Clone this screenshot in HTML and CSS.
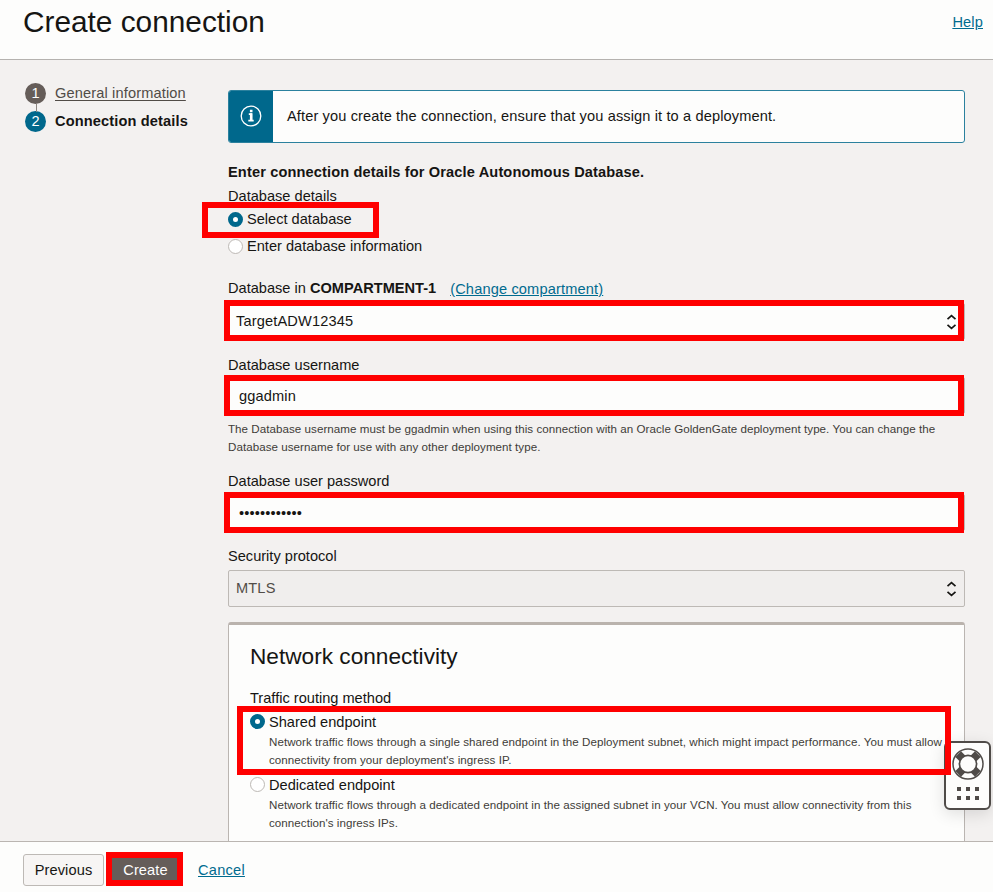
FILE: index.html
```
<!DOCTYPE html>
<html lang="en">
<head>
<meta charset="utf-8">
<title>Create connection</title>
<link rel="stylesheet" href="styles.css">
</head>
<body>
<div class="dialog">
  <header class="header">
    <h1>Create connection</h1>
    <a class="link help" href="#">Help</a>
  </header>
  <main class="main">
    <nav class="steps">
      <div class="step done"><span class="num">1</span><a href="#">General information</a></div>
      <div class="step current"><span class="num">2</span><b>Connection details</b></div>
    </nav>
    <section class="content">
      <div class="alert">
        <div class="alert-icon">
          <svg width="22" height="22" viewBox="0 0 22 22" fill="none" stroke="#fff"><circle cx="11" cy="11" r="9.8" stroke-width="1.3"/><path d="M8.8 9.2h2.4v6.3M8.3 15.6h5.4" stroke-width="1.8"/><path d="M11.2 8.3v7.5" stroke-width="2.6"/><path d="M9.9 6h2.6" stroke-width="2.3"/></svg>
        </div>
        <p>After you create the connection, ensure that you assign it to a deployment.</p>
      </div>
      <h2 class="heading">Enter connection details for Oracle Autonomous Database.</h2>
      <div class="label group-label">Database details</div>
      <div class="radio marked mark-select"><span class="dot on"></span>Select database</div>
      <div class="radio second"><span class="dot"></span>Enter database information</div>
      <div class="label compartment"><span>Database in <b>COMPARTMENT-1</b></span><a class="link" href="#">(Change compartment)</a></div>
      <div class="field select marked mark-field first"><span>TargetADW12345</span>
        <svg class="chev" width="11" height="16" viewBox="0 0 11 16"><path d="M1.5 5.2 5.5 1.7 9.5 5.2M1.5 10.8 5.5 14.3 9.5 10.8"/></svg>
      </div>
      <div class="label username">Database username</div>
      <div class="field input marked mark-field">ggadmin</div>
      <p class="hint">The Database username must be ggadmin when using this connection with an Oracle GoldenGate deployment type. You can change the<br>Database username for use with any other deployment type.</p>
      <div class="label password">Database user password</div>
      <div class="field input secret marked mark-field"><span>••••••••••••</span></div>
      <div class="label protocol">Security protocol</div>
      <div class="field select disabled"><span>MTLS</span>
        <svg class="chev" width="11" height="16" viewBox="0 0 11 16"><path d="M1.5 5.2 5.5 1.7 9.5 5.2M1.5 10.8 5.5 14.3 9.5 10.8"/></svg>
      </div>
      <div class="panel">
        <h2>Network connectivity</h2>
        <div class="label routing">Traffic routing method</div>
        <div class="option marked mark-option">
          <div class="radio"><span class="dot on"></span>Shared endpoint</div>
          <p class="desc">Network traffic flows through a single shared endpoint in the Deployment subnet, which might impact performance. You must allow<br>connectivity from your deployment's ingress IP.</p>
        </div>
        <div class="option">
          <div class="radio"><span class="dot"></span>Dedicated endpoint</div>
          <p class="desc">Network traffic flows through a dedicated endpoint in the assigned subnet in your VCN. You must allow connectivity from this<br>connection's ingress IPs.</p>
        </div>
      </div>
    </section>
  </main>
  <footer class="footer">
    <button class="btn">Previous</button>
    <button class="btn primary marked mark-create">Create</button>
    <a class="link" href="#">Cancel</a>
  </footer>
  <div class="support">
    <svg width="32" height="32" viewBox="0 0 32 32" fill="none" stroke="#4f4b48">
      <path d="M6.2 6.2 25.8 25.8M25.8 6.2 6.2 25.8" stroke-width="8"/>
      <circle cx="16" cy="16" r="15" stroke-width="1.5"/>
      <circle cx="16" cy="16" r="8.6" stroke-width="1.7" fill="#fdfdfc"/>
    </svg>
    <div class="grip"><i></i><i></i><i></i><i></i><i></i><i></i></div>
  </div>
</div>
</body>
</html>
```
FILE: styles.css
```
*, *::after { box-sizing: border-box; }
body {
  margin: 0;
  background: #fdfdfc;
  color: #161513;
  font: 14.6px/20px "Liberation Sans", Arial, sans-serif;
}
h1, h2, p { margin: 0; font-weight: normal; }
.dialog {
  position: relative;
  display: flex;
  flex-direction: column;
  height: 892px;
  overflow: hidden;
}
.header {
  flex: none;
  display: flex;
  justify-content: space-between;
  height: 60px;
  padding: 2px 10px 0 23px;
  border-bottom: 1px solid #b5b2af;
}
h1 { font-size: 29.8px; line-height: 40px; }
.link {
  color: #006b8f;
  text-decoration: underline;
  text-underline-offset: 1px;
  letter-spacing: .15px;
}
.help { padding-top: 10px; }
.main {
  flex: 1;
  min-height: 0;
  display: flex;
  background: #f3f1f0;
  overflow: hidden;
}
.steps {
  flex: none;
  width: 228px;
  padding: 22px 0 0 25px;
  letter-spacing: .13px;
}
.step { display: flex; align-items: center; gap: 9px; height: 22px; }
.step + .step { margin-top: 6px; }
.step a { color: #514c47; text-underline-offset: 2px; letter-spacing: .14px; }
.num {
  width: 21px;
  height: 21px;
  border-radius: 50%;
  background: #655d59;
  color: #fff;
  text-align: center;
  line-height: 21px;
}
.done .num { position: relative; }
.done .num::after {
  content: "";
  position: absolute;
  left: 11px;
  top: 21px;
  width: 1px;
  height: 8px;
  background: #8b8580;
}
.current .num { background: #00688c; }
.content { flex: none; width: 737px; padding-top: 30px; }
.alert {
  display: flex;
  height: 53px;
  border: 1px solid #2b819e;
  border-radius: 3px;
  background: #fdfdfc;
  overflow: hidden;
}
.alert-icon {
  width: 44px;
  display: flex;
  align-items: center;
  justify-content: center;
  padding: 0 1px 1px 0;
  background: #00688c;
}
.alert p { padding: 15px 0 0 14px; letter-spacing: .12px; }
.heading {
  margin-top: 19px;
  font-size: 14.6px;
  font-weight: bold;
  letter-spacing: .13px;
}
.group-label { margin-top: 4px; }
.radio { display: flex; align-items: center; gap: 4px; height: 20px; }
.mark-select { margin-top: 3px; }
.second { margin-top: 7px; }
.dot {
  width: 15px;
  height: 15px;
  border: 1px solid #bdb9b5;
  border-radius: 50%;
  background: #fff;
}
.dot.on { border: 5px solid #00688c; }
.marked { position: relative; }
.marked::after {
  content: "";
  position: absolute;
  border: 6px solid #f00;
}
.mark-select::after { left: -26px; top: -7px; width: 177px; height: 36px; }
.compartment { display: flex; gap: 14px; margin-top: 22px; }
.compartment .link { position: relative; top: 1px; }
.field {
  display: flex;
  align-items: center;
  justify-content: space-between;
  height: 37px;
  border: 1px solid #bdb9b5;
  border-radius: 2px;
  background: #fdfdfc;
  padding: 0 7px;
  letter-spacing: .15px;
}
.select span { padding-bottom: 2px; }
.first { margin-top: 5px; }
.mark-field::after { left: -5px; top: -4px; width: 740px; height: 41px; }
.input.mark-field::after { top: -3px; }
.chev { fill: none; stroke: #161513; stroke-width: 1.7; }
.username { margin-top: 15px; }
.input { margin-top: 2px; padding-left: 10px; }
.hint, .desc {
  font-size: 11.6px;
  line-height: 18px;
  color: #403c38;
  white-space: nowrap;
  letter-spacing: .043px;
}
.hint { margin-top: 6px; }
.password { margin-top: 15px; }
.secret { margin-top: 3px; }
.protocol { margin-top: 15px; }
.disabled { margin-top: 4px; background: #f0eeed; color: #514c47; }
.panel {
  height: 260px;
  margin-top: 15px;
  padding: 18px 0 0 21px;
  border: 1px solid #bab5b1;
  border-top: 3px solid #bab3ad;
  border-radius: 3px 3px 0 0;
  background: #fdfdfc;
}
.panel h2 { font-size: 22.65px; line-height: 26px; }
.routing { margin: 19px 0 4px; }
.option { height: 63px; }
.option .dot { margin-bottom: 1px; }
.desc { padding: 1px 0 0 19px; }
.mark-option { z-index: 2; }
.mark-option::after { left: -13px; top: -6px; width: 714px; height: 69px; }
.footer {
  flex: none;
  display: flex;
  align-items: center;
  height: 51px;
  padding: 6px 0 0 23px;
  border-top: 1px solid #bab5b1;
}
.btn {
  width: 81px;
  height: 32px;
  padding: 0;
  border: 1px solid #bdb9b5;
  border-radius: 3px;
  background: #f7f5f4;
  color: #161513;
  font: inherit;
  letter-spacing: .12px;
}
.primary {
  width: 69px;
  margin: 0 17px 0 7px;
  background: #655d59;
  color: #fff;
}
.mark-create::after { left: -6px; top: -3px; width: 77px; height: 34px; }
.footer .link { margin-left: 1px; letter-spacing: .25px; }
.support {
  position: absolute;
  left: 944px;
  top: 741px;
  width: 47px;
  height: 69px;
  padding-top: 5px;
  border: 2px solid #4f4b48;
  border-radius: 6px;
  background: #fdfdfc;
  box-shadow: 0 4px 16px rgba(0, 0, 0, .12);
  display: flex;
  flex-direction: column;
  align-items: center;
}
.support svg { flex: none; }
.main { position: relative; z-index: auto; }
.grip {
  display: grid;
  grid-template-columns: repeat(3, 4px);
  gap: 5px;
  margin-top: 7px;
}
.grip i { height: 4px; background: #4f4b48; }
```
